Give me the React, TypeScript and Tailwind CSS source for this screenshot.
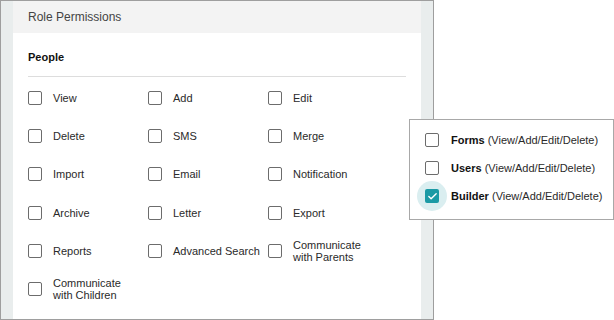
import { Check } from 'lucide-react';

const FONT = '[font-family:"Liberation_Sans",Arial,sans-serif]';

const ROWS: string[][][] = [
  [['View'], ['Add'], ['Edit']],
  [['Delete'], ['SMS'], ['Merge']],
  [['Import'], ['Email'], ['Notification']],
  [['Archive'], ['Letter'], ['Export']],
  [['Reports'], ['Advanced Search'], ['Communicate', 'with Parents']],
  [['Communicate', 'with Children']],
];

const EXTRA = [
  { name: 'Forms', checked: false },
  { name: 'Users', checked: false },
  { name: 'Builder', checked: true },
];

function Box() {
  return <span className="block w-[14px] h-[14px] shrink-0 border border-[#6c6c6c] rounded-[2px] bg-white" />;
}

export default function App() {
  return (
    <div className={`relative w-[614px] h-[320px] bg-white ${FONT}`}>
      <div className="w-[434px] h-[320px] border border-[#9e9e9e] bg-[#e9eded] px-[12px] flex flex-col">
        <div className="h-[32px] shrink-0 bg-[#f3f3f3] pl-[15px] flex items-center text-[12px] text-[#444]">
          Role Permissions
        </div>
        <div className="flex-1 bg-white px-[15px] pt-[18px]">
          <p className="text-[11px] leading-[13px] font-bold text-[#111]">People</p>
          <div className="mt-[12px] h-px bg-[#dddddd]" />
          <div className="pt-[2px]">
            {ROWS.map((row, r) => (
              <div key={r} className="flex h-[38.2px]">
                {row.map((lines, c) => (
                  <div key={c} className="w-[120px] flex items-center gap-[11px]">
                    <Box />
                    <span className="text-[11px] leading-[12px] text-[#2a2a2a] whitespace-nowrap">
                      {lines.map((l, i) => (
                        <span key={i} className="block">{l}</span>
                      ))}
                    </span>
                  </div>
                ))}
              </div>
            ))}
          </div>
        </div>
      </div>

      {/* Extra permissions popover */}
      <div className="absolute left-[409px] top-[119px] w-[205px] border border-[#a8a8a8] bg-white pl-[15px] pt-[6px] pb-[9px]">
        {EXTRA.map(item => (
          <div key={item.name} className="h-[28px] flex items-center gap-[12px]">
            {item.checked ? (
              <span className="relative w-[14px] h-[14px] shrink-0">
                <span className="absolute left-[-8px] top-[-8px] w-[30px] h-[30px] rounded-full bg-[#daeef0]" />
                <span className="absolute inset-0 rounded-[2px] bg-[#1b9aa5] flex items-center justify-center">
                  <Check className="text-white" style={{ width: 11, height: 11 }} strokeWidth={3} />
                </span>
              </span>
            ) : (
              <Box />
            )}
            <span className="text-[11px] leading-[13px] text-[#2a2a2a] whitespace-nowrap">
              <span className="font-bold text-[#111]">{item.name}</span> (View/Add/Edit/Delete)
            </span>
          </div>
        ))}
      </div>
    </div>
  );
}
